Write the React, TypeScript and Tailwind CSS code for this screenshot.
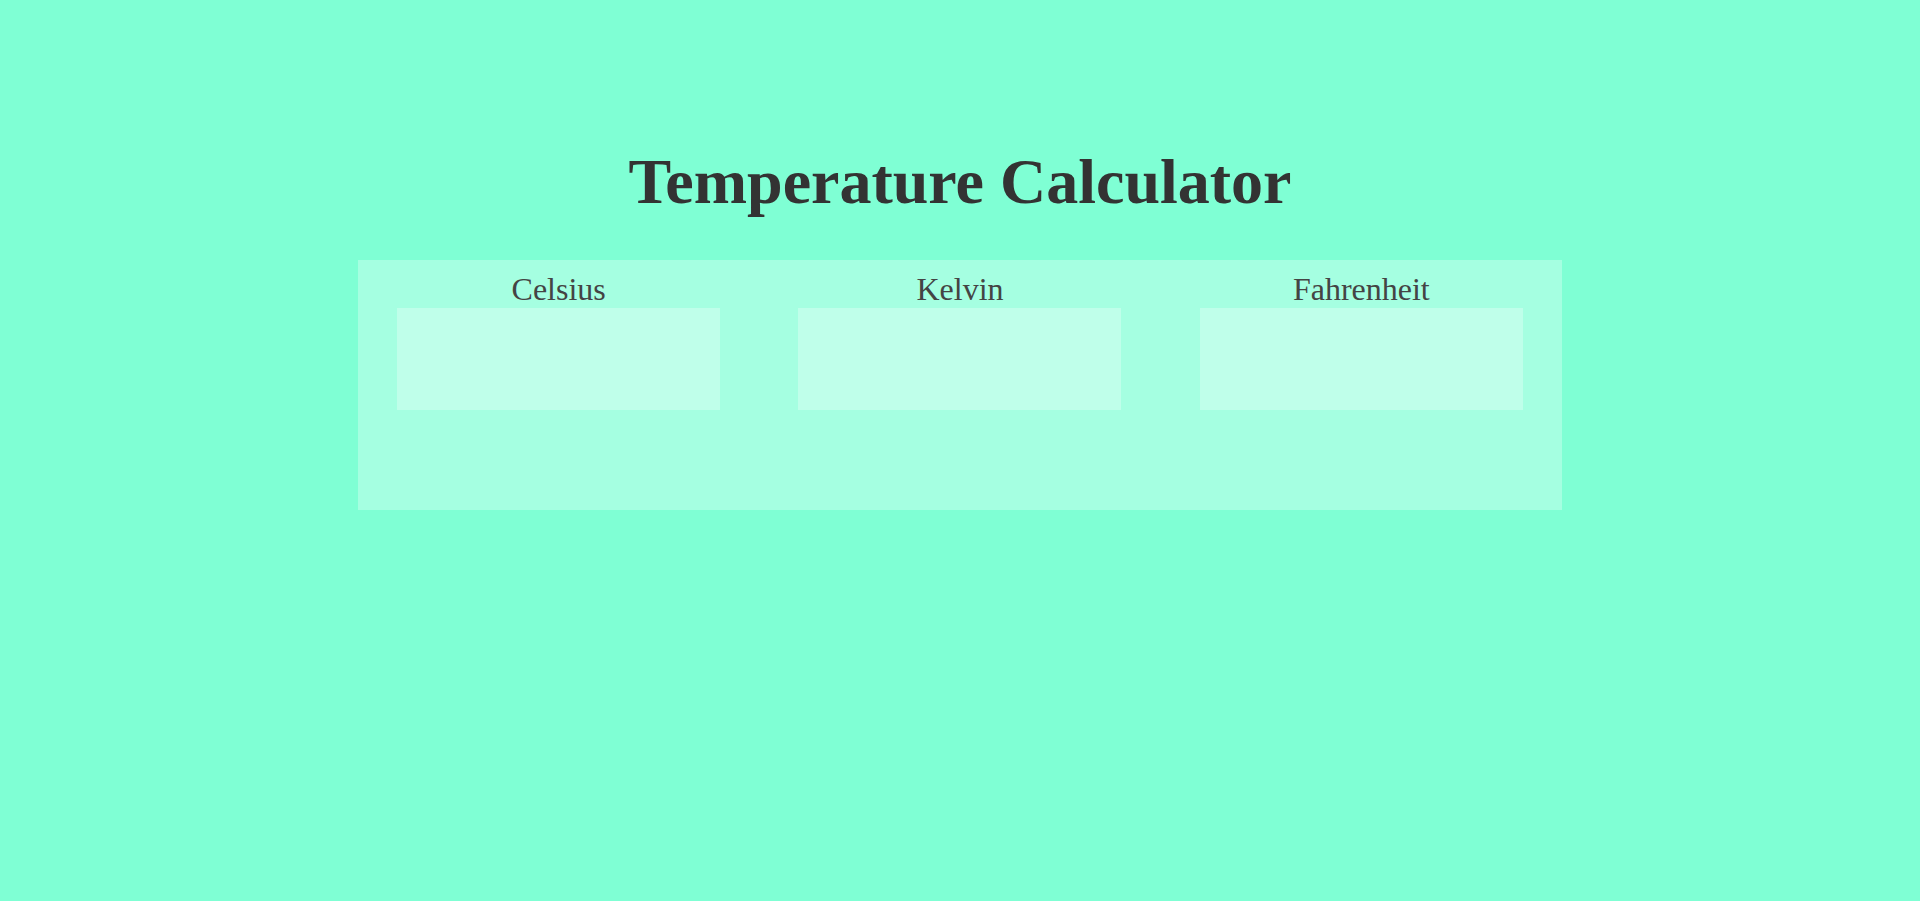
import { useState } from "react";

type Unit = {
    key: string,
    label: string
}

const units: Unit[] = [
    { key: "c", label: "Celsius" },
    { key: "k", label: "Kelvin" },
    { key: "f", label: "Fahrenheit" },
];

export default function App() {
    const [values, setValues] = useState<Record<string, string>>({ c: "", k: "", f: "" });

    const handleChange = (key: string, raw: string) => {
        const n = parseFloat(raw);
        if (isNaN(n)) {
            setValues({ c: "", k: "", f: "", [key]: raw });
            return;
        }
        let c = n;
        if (key === "k") c = n - 273.15;
        if (key === "f") c = (n - 32) * 5 / 9;
        const fmt = (v: number) => String(Math.round(v * 100) / 100);
        setValues({
            c: key === "c" ? raw : fmt(c),
            k: key === "k" ? raw : fmt(c + 273.15),
            f: key === "f" ? raw : fmt(c * 9 / 5 + 32),
        });
    }

    return (
        <div className="min-h-screen bg-[#7fffd4] pt-[146px] font-['Liberation_Serif','Times_New_Roman',serif]">
            <h1 className="text-center text-[64px] leading-[71px] font-bold text-[#333333] mb-[43px]">
                Temperature Calculator
            </h1>
            <div className="w-[1204px] mx-auto bg-[#a5ffe1] pt-[12px] pb-[100px] grid grid-cols-3">
                {units.map(u => (
                    <div key={u.key} className="flex flex-col items-center">
                        <label className="text-[32px] leading-[35px] text-[#444444]">{u.label}</label>
                        <input
                            type="text"
                            value={values[u.key]}
                            onChange={e => handleChange(u.key, e.target.value)}
                            className="mt-px w-[323px] h-[102px] bg-[#bfffea] text-[32px] text-center text-[#333333] outline-none border-0"
                        />
                    </div>
                ))}
            </div>
        </div>
    )
}
